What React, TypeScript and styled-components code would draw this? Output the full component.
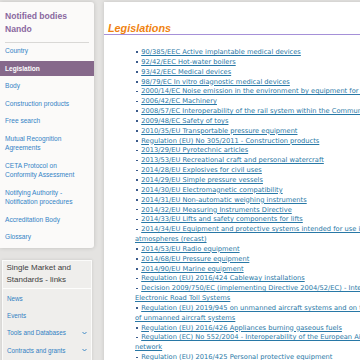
import styled, { createGlobalStyle } from 'styled-components';

const GlobalStyle = createGlobalStyle`
  html, body {
    margin: 0;
    padding: 0;
    background: #e4e3e1;
    overflow: hidden;
  }
`;

const Page = styled.div`
  display: flex;
  align-items: flex-start;
  width: 480px;
  padding-top: 2px;
  font-family: 'Liberation Sans', Arial, sans-serif;
`;

const Sidebar = styled.aside`
  flex: 0 0 94px;
  display: flex;
  flex-direction: column;
  gap: 12px;
`;

const NandoCard = styled.nav`
  background: #fbfaf9;
  border-radius: 0 3px 3px 0;
  box-shadow: 0 0 4px rgba(0, 0, 0, 0.16);
  padding-bottom: 1px;
`;

const NandoTitle = styled.h2`
  margin: 0;
  padding: 7.5px 5px 6.5px;
  font-size: 8.6px;
  line-height: 13px;
  font-weight: bold;
  color: #8a68a0;
`;

const Rule = styled.hr`
  margin: 0 5px;
  border: 0;
  border-top: 1px solid #d9d8d6;
`;

const MenuList = styled.ul`
  list-style: none;
  margin: 0;
  padding: 0;
`;

const MenuItem = styled.li<{ $active?: boolean }>`
  padding: 3px 5px;
  margin-bottom: 2px;
  font-size: 6.6px;
  line-height: 9.5px;
  color: ${(p) => (p.$active ? '#fff' : '#3484c6')};
  font-weight: ${(p) => (p.$active ? 'bold' : 'normal')};
  background: ${(p) => (p.$active ? '#86698b' : 'transparent')};
`;

const LinksCard = styled.section`
  margin-left: 1.5px;
  margin-right: 2px;
  background: #efeeec;
  border: 1px solid #fbfbfa;
  box-shadow: 0 0 3px rgba(0, 0, 0, 0.12);
  min-height: 120px;
`;

const LinksTitle = styled.h3`
  margin: 0;
  padding: 1px 4px 2px;
  font-size: 8px;
  line-height: 12px;
  font-weight: normal;
  color: #404040;
  border-bottom: 1px solid #fdfdfc;
`;

const LinksList = styled.ul`
  list-style: none;
  margin: 0;
  padding: 1.5px 0 0;
`;

const LinksItem = styled.li`
  display: flex;
  align-items: center;
  justify-content: space-between;
  padding: 3.9px 4px 3.9px 4.5px;
  font-size: 6.3px;
  line-height: 9.5px;
  color: #2f7fc3;
`;

const Chevron = styled.svg`
  width: 5px;
  height: 4px;
  margin-right: 0.5px;
`;

const Main = styled.main`
  flex: 0 0 353px;
  margin-left: 10px;
  background: #fff;
  box-shadow: 0 0 4px rgba(0, 0, 0, 0.14);
  min-height: 400px;
`;

const Heading = styled.h1`
  margin: 0;
  padding: 21px 0 0 4px;
  font-family: 'Liberation Sans', Arial, sans-serif;
  font-size: 10.8px;
  line-height: 10.5px;
  font-weight: bold;
  font-style: italic;
  color: #f0820f;
  border-bottom: 1px solid #a590d8;
`;

const LawList = styled.ul`
  list-style: none;
  margin: 13.5px 0 0;
  padding: 0 17px 0 31px;
  font-family: 'DejaVu Sans', Verdana, sans-serif;
  font-size: 6.7px;
  line-height: 9.85px;
`;

const LawItem = styled.li`
  &::before {
    content: '';
    display: inline-block;
    width: 1.6px;
    height: 1.6px;
    margin: 0 3.6px 0 1px;
    vertical-align: middle;
    background: #3b5b8c;
  }
`;

const LawLink = styled.a`
  color: #2878a6;
  text-decoration: underline;
`;

const menu = [
  'Country',
  'Legislation',
  'Body',
  'Construction products',
  'Free search',
  'Mutual Recognition Agreements',
  'CETA Protocol on Conformity Assessment',
  'Notifying Authority - Notification procedures',
  'Accreditation Body',
  'Glossary',
];

const links = [
  { label: 'News' },
  { label: 'Events' },
  { label: 'Tools and Databases', more: true },
  { label: 'Contracts and grants', more: true },
];

const laws = [
  '90/385/EEC Active implantable medical devices',
  '92/42/EEC Hot-water boilers',
  '93/42/EEC Medical devices',
  '98/79/EC In vitro diagnostic medical devices',
  '2000/14/EC Noise emission in the environment by equipment for use outdoors',
  '2006/42/EC Machinery',
  '2008/57/EC Interoperability of the rail system within the Community',
  '2009/48/EC Safety of toys',
  '2010/35/EU Transportable pressure equipment',
  'Regulation (EU) No 305/2011 - Construction products',
  '2013/29/EU Pyrotechnic articles',
  '2013/53/EU Recreational craft and personal watercraft',
  '2014/28/EU Explosives for civil uses',
  '2014/29/EU Simple pressure vessels',
  '2014/30/EU Electromagnetic compatibility',
  '2014/31/EU Non-automatic weighing instruments',
  '2014/32/EU Measuring Instruments Directive',
  '2014/33/EU Lifts and safety components for lifts',
  '2014/34/EU Equipment and protective systems intended for use in potentially explosive atmospheres (recast)',
  '2014/53/EU Radio equipment',
  '2014/68/EU Pressure equipment',
  '2014/90/EU Marine equipment',
  'Regulation (EU) 2016/424 Cableway installations',
  'Decision 2009/750/EC (implementing Directive 2004/52/EC) - Interoperability of Electronic Road Toll Systems',
  'Regulation (EU) 2019/945 on unmanned aircraft systems and on third-country operators of unmanned aircraft systems',
  'Regulation (EU) 2016/426 Appliances burning gaseous fuels',
  'Regulation (EC) No 552/2004 - Interoperability of the European Air Traffic Management network',
  'Regulation (EU) 2016/425 Personal protective equipment',
  'Regulation (EU) 2017/745 Medical devices',
];

export default function App() {
  return (
    <>
      <GlobalStyle />
      <Page>
        <Sidebar>
          <NandoCard>
            <NandoTitle>
              Notified bodies
              <br />
              Nando
            </NandoTitle>
            <Rule />
            <MenuList>
              {menu.map((item) => (
                <MenuItem key={item} $active={item === 'Legislation'}>
                  {item}
                </MenuItem>
              ))}
            </MenuList>
          </NandoCard>
          <LinksCard>
            <LinksTitle>Single Market and Standards - links</LinksTitle>
            <LinksList>
              {links.map((link) => (
                <LinksItem key={link.label}>
                  {link.label}
                  {link.more && (
                    <Chevron viewBox="0 0 10 8">
                      <path
                        d="M1 2 L5 6 L9 2"
                        fill="none"
                        stroke="#2f7fc3"
                        strokeWidth="1.8"
                      />
                    </Chevron>
                  )}
                </LinksItem>
              ))}
            </LinksList>
          </LinksCard>
        </Sidebar>
        <Main>
          <Heading>Legislations</Heading>
          <LawList>
            {laws.map((law) => (
              <LawItem key={law}>
                <LawLink href="#">{law}</LawLink>
              </LawItem>
            ))}
          </LawList>
        </Main>
      </Page>
    </>
  );
}
